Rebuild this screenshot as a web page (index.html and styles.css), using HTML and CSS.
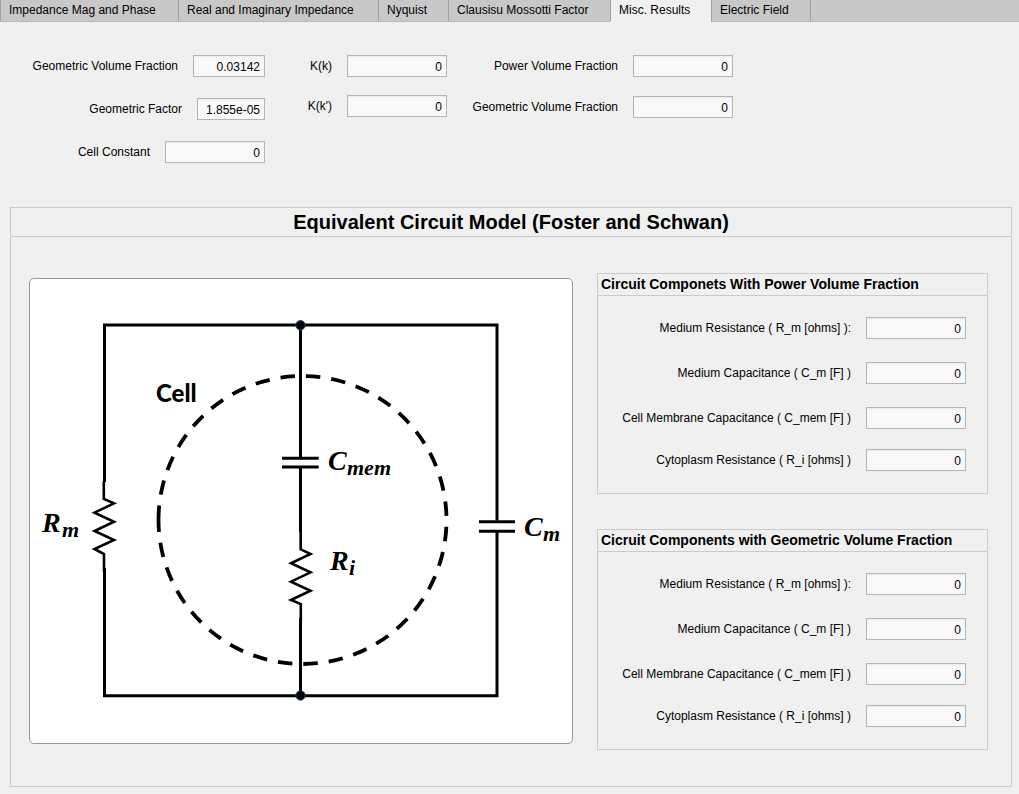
FILE: index.html
```html
<!DOCTYPE html>
<html lang="en">
<head>
<meta charset="utf-8">
<title>Misc. Results</title>
<link rel="stylesheet" href="styles.css">
</head>
<body>
<div class="tabs" role="tablist">
  <button class="tab" role="tab" aria-selected="false">Impedance Mag and Phase</button>
  <button class="tab" role="tab" aria-selected="false">Real and Imaginary Impedance</button>
  <button class="tab" role="tab" aria-selected="false">Nyquist</button>
  <button class="tab" role="tab" aria-selected="false">Clausisu Mossotti Factor</button>
  <button class="tab tab-active" role="tab" aria-selected="true">Misc. Results</button>
  <button class="tab" role="tab" aria-selected="false">Electric Field</button>
  <div class="tab-rest"></div>
</div>
<main class="page">
  <form class="summary">
    <div class="column column-geometry">
      <div class="field"><label for="gvf">Geometric Volume Fraction</label><input class="value value-medium" id="gvf" value="0.03142"></div>
      <div class="field"><label for="gf">Geometric Factor</label><input class="value value-small" id="gf" value="1.855e-05"></div>
      <div class="field"><label for="cc">Cell Constant</label><input class="value" id="cc" value="0"></div>
    </div>
    <div class="column column-k">
      <div class="field"><label for="kk">K(k)</label><input class="value" id="kk" value="0"></div>
      <div class="field"><label for="kk2">K(k')</label><input class="value" id="kk2" value="0"></div>
    </div>
    <div class="column column-power">
      <div class="field"><label for="pvf">Power Volume Fraction</label><input class="value" id="pvf" value="0"></div>
      <div class="field"><label for="gvf2">Geometric Volume Fraction</label><input class="value" id="gvf2" value="0"></div>
    </div>
  </form>

  <section class="panel">
    <h1 class="panel-title">Equivalent Circuit Model (Foster and Schwan)</h1>
    <div class="panel-body">
      <div class="diagram">
        <svg class="circuit" viewBox="30 279 542 464" role="img" aria-label="Equivalent circuit of a cell">
          <g class="wire">
            <path d="M104.500 482V325H497V520.500M104.500 568V695.700H497V532"/>
            <path d="M300.500 325V457M300.500 468V532M300.500 618V695.500"/>
            <path d="M282 458.300H318.700M282 467H318.700M479 521.700H515M479 531.300H515"/>
          </g>
          <g class="resistor">
            <path d="M103.800 481V499L114 503.300L94.500 512.700L114 521.700L94.500 531L114 540L94.500 549L104 554V571.500"/>
            <path d="M300.700 531V549.300L310.500 554L291 563.300L310.500 572.300L291 581.700L310.500 590.700L291 600L300.800 604V622"/>
          </g>
          <path class="membrane" d="M158.500 520A144 144 0 0 1 446.500 520A144 144 0 0 1 158.500 520"/>
          <circle class="node" cx="300.500" cy="325.300" r="4.700"/>
          <circle class="node" cx="300.500" cy="695.500" r="4.700"/>
          <text class="cell-name" x="156" y="402">Cell</text>
          <text class="symbol" x="42" y="532">R</text><text class="sub" x="62" y="537">m</text>
          <text class="symbol" x="328" y="470">C</text><text class="sub" x="347" y="475">mem</text>
          <text class="symbol" x="330" y="570">R</text><text class="sub" x="349" y="575">i</text>
          <text class="symbol" x="524" y="536">C</text><text class="sub" x="543" y="541">m</text>
        </svg>
      </div>
      <div class="groups">
        <section class="group">
          <h2 class="group-title">Circuit Componets With Power Volume Fraction</h2>
          <div class="group-body">
            <div class="field"><label for="p1">Medium Resistance ( R_m [ohms] ):</label><input class="value" id="p1" value="0"></div>
            <div class="field"><label for="p2">Medium Capacitance ( C_m [F] )</label><input class="value" id="p2" value="0"></div>
            <div class="field"><label for="p3">Cell Membrane Capacitance ( C_mem [F] )</label><input class="value" id="p3" value="0"></div>
            <div class="field"><label for="p4">Cytoplasm Resistance ( R_i [ohms] )</label><input class="value" id="p4" value="0"></div>
          </div>
        </section>
        <section class="group">
          <h2 class="group-title">Cicruit Components with Geometric Volume Fraction</h2>
          <div class="group-body">
            <div class="field"><label for="g1">Medium Resistance ( R_m [ohms] ):</label><input class="value" id="g1" value="0"></div>
            <div class="field"><label for="g2">Medium Capacitance ( C_m [F] )</label><input class="value" id="g2" value="0"></div>
            <div class="field"><label for="g3">Cell Membrane Capacitance ( C_mem [F] )</label><input class="value" id="g3" value="0"></div>
            <div class="field"><label for="g4">Cytoplasm Resistance ( R_i [ohms] )</label><input class="value" id="g4" value="0"></div>
          </div>
        </section>
      </div>
    </div>
  </section>
</main>
</body>
</html>
```
FILE: styles.css
```css
* { box-sizing: border-box; }
body {
  margin: 0;
  background: #f0f0f0;
  color: #000;
  font: 12px/22px "Liberation Sans", Arial, sans-serif;
}

.tabs {
  display: grid;
  grid-template-columns: 178px 200px 70px 162px 101px 99px 1fr;
  height: 22px;
}
.tab, .tab-rest {
  height: 22px;
  border: 0 solid #a0a0a0;
  border-left-width: 1px;
  border-bottom: 1px solid #b9b9b9;
  background: #c8c8c8;
}
.tab {
  padding: 0 0 1px 8px;
  color: inherit;
  font: inherit;
  line-height: 20px;
  text-align: left;
  white-space: nowrap;
}
.tab-active { background: #f0f0f0; border-bottom-color: #f0f0f0; }

.page { padding: 33px 7px 7px 10px; }

.summary { display: flex; height: 152px; }
.column { display: flex; flex-direction: column; }
.column-geometry { width: 255px; gap: 21px; }
.column-k { width: 182px; gap: 18px; }
.column-power { width: 286px; gap: 19px; }

.field {
  display: flex;
  justify-content: flex-end;
  gap: 15px;
  height: 22px;
  white-space: nowrap;
}
.value {
  width: 100px;
  height: 22px;
  padding: 2px 4px 0;
  border: 1px solid #b5b5b5;
  border-radius: 0;
  background: #f9f9f9;
  box-shadow: inset 0 1px 1px #ececec;
  color: inherit;
  font: inherit;
  text-align: right;
}
.value-medium { width: 72px; }
.value-small { width: 68px; }

.panel { border: 1px solid #cacaca; }
.panel-title {
  margin: 0;
  border-bottom: 1px solid #cacaca;
  font-size: 20px;
  line-height: 28px;
  text-align: center;
}
.panel-body {
  display: flex;
  align-items: flex-start;
  gap: 24px;
  padding: 36px 23px 36px 18px;
}
.diagram {
  flex: 542 1 0;
  margin-top: 5px;
  border: 1px solid #969696;
  border-radius: 5px;
  background: #fff;
}
.circuit { display: block; width: 100%; }
.groups {
  display: flex;
  flex: 391 1 0;
  flex-direction: column;
  gap: 35px;
}
.group { border: 1px solid #cacaca; }
.group-title {
  margin: 0;
  padding: 0 3px;
  border-bottom: 1px solid #cacaca;
  font-size: 14px;
  line-height: 21px;
  white-space: nowrap;
}
.group-body {
  display: grid;
  grid-template-rows: 45px 45px 42px 22px;
  padding: 21px 21px 22px;
}

.wire { fill: none; stroke: #000; stroke-width: 3; }
.resistor { fill: none; stroke: #000; stroke-width: 2.6; }
.membrane { fill: none; stroke: #000; stroke-width: 3.800; stroke-dasharray: 14.500 11; }
.node { fill: #000; stroke: #24407a; stroke-width: 1; }
.cell-name { font: 900 24px Lato, sans-serif; }
.symbol { font: italic bold 28px "Liberation Serif", serif; }
.sub { font: italic bold 22px "Liberation Serif", serif; }
```
